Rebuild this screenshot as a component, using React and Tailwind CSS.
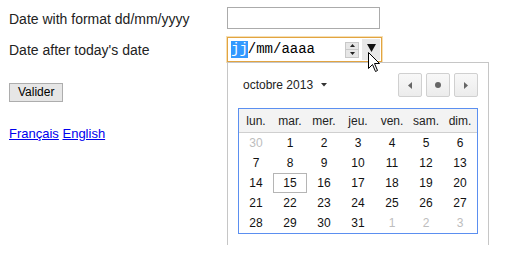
import React from "react";

const WEEKDAYS = ["lun.", "mar.", "mer.", "jeu.", "ven.", "sam.", "dim."];

const WEEKS = [
  [[30, true], [1], [2], [3], [4], [5], [6]],
  [[7], [8], [9], [10], [11], [12], [13]],
  [[14], [15], [16], [17], [18], [19], [20]],
  [[21], [22], [23], [24], [25], [26], [27]],
  [[28], [29], [30], [31], [1, true], [2, true], [3, true]],
];

function NavButton({ children }) {
  return (
    <div className="w-[24px] h-[24px] rounded-[2px] border border-[#d0d0d0] bg-gradient-to-b from-[#f8f8f8] to-[#ececec] flex items-center justify-center">
      {children}
    </div>
  );
}

function DatePopup() {
  return (
    <div className="absolute left-[227px] top-[62px] w-[262px] h-[183px] border-x border-t border-[#c6c6c6] bg-white px-[10px] pt-[10px]">
      <div className="flex items-center justify-between">
        <div className="flex items-center gap-[8px] pl-[5px] text-[12px] text-[#222]">
          <span>octobre 2013</span>
          <svg width="6" height="4" viewBox="0 0 6 4">
            <path d="M0 0 L6 0 L3 3.5 Z" fill="#333" />
          </svg>
        </div>
        <div className="flex gap-[4px]">
          <NavButton>
            <svg width="4" height="7" viewBox="0 0 4 7">
              <path d="M4 0 L4 7 L0 3.5 Z" fill="#666" />
            </svg>
          </NavButton>
          <NavButton>
            <div className="w-[6px] h-[6px] rounded-full bg-[#666]" />
          </NavButton>
          <NavButton>
            <svg width="4" height="7" viewBox="0 0 4 7">
              <path d="M0 0 L0 7 L4 3.5 Z" fill="#666" />
            </svg>
          </NavButton>
        </div>
      </div>

      <div className="mt-[11px] w-[240px] border border-[#5b8ff0] text-[12px]">
        <div className="grid grid-cols-7 h-[24px] bg-[#f3f3f3] border-b border-[#cfcfcf] items-center text-center text-[#222]">
          {WEEKDAYS.map((d) => (
            <div key={d}>{d}</div>
          ))}
        </div>
        {WEEKS.map((week, wi) => (
          <div key={wi} className="grid grid-cols-7 h-[20px]">
            {week.map(([n, muted], di) => (
              <div
                key={di}
                className={`flex items-center justify-center ${
                  muted ? "text-[#bdbdbd]" : "text-[#111]"
                } ${n === 15 && !muted ? "border border-[#b5b5b5]" : ""}`}
              >
                {n}
              </div>
            ))}
          </div>
        ))}
      </div>
    </div>
  );
}

function Cursor() {
  return (
    <svg
      className="absolute left-[368px] top-[52px]"
      width="13"
      height="21"
      viewBox="0 0 13 21"
    >
      <path
        d="M0.5 0.5 L0.5 16.5 L4.5 12.5 L7.5 19.5 L9.5 18.5 L6.5 11.5 L11.5 11.5 Z"
        fill="#fff"
        stroke="#000"
        strokeWidth="1"
        strokeLinejoin="miter"
      />
    </svg>
  );
}

export default function App() {
  return (
    <div className="relative w-[508px] h-[264px] bg-white font-['Liberation_Sans',Arial,sans-serif] text-[#222] overflow-hidden">
      <div className="pl-[9px] pt-[7px]">
        <div className="flex items-center h-[22px]">
          <label className="w-[218px] text-[14px] leading-[16px] pt-[2px]">
            Date with format dd/mm/yyyy
          </label>
          <div className="w-[153px] h-[22px] border border-[#ababab] bg-white" />
        </div>

        <div className="flex items-center h-[25px] mt-[8px]">
          <label className="w-[218px] text-[14px] leading-[16px] pt-[1px]">
            Date after today's date
          </label>
          <div className="w-[155px] h-[25px] border border-[#e2a440] shadow-[0_0_0_1px_#f6dfb4] bg-white flex items-center pl-[3px] pr-[1px]">
            <div className="font-['Liberation_Mono',monospace] text-[14px] leading-[17px] text-black flex">
              <span className="bg-[#3399ff] text-white">jj</span>
              <span>/mm/aaaa</span>
            </div>
            <div className="ml-auto flex items-center gap-[3px]">
              <div className="w-[14px] h-[16px] border border-[#c8c8c8] bg-[#e6e6e6] flex flex-col">
                <div className="flex-1 flex items-center justify-center border-b border-[#c8c8c8]">
                  <svg width="5" height="3" viewBox="0 0 5 3">
                    <path d="M0 3 L5 3 L2.5 0 Z" fill="#222" />
                  </svg>
                </div>
                <div className="flex-1 flex items-center justify-center">
                  <svg width="5" height="3" viewBox="0 0 5 3">
                    <path d="M0 0 L5 0 L2.5 3 Z" fill="#222" />
                  </svg>
                </div>
              </div>
              <div className="w-[18px] h-[21px] bg-[#e8e8e8] flex items-start justify-center pt-[5px]">
                <svg width="9" height="8" viewBox="0 0 9 8">
                  <path d="M0 0 L9 0 L4.5 8 Z" fill="#111" />
                </svg>
              </div>
            </div>
          </div>
        </div>

        <button className="mt-[21px] h-[19px] px-[8px] border border-[#adadad] bg-[#e6e6e6] text-[12px] leading-[15px] text-black">
          Valider
        </button>

        <div className="mt-[23px] text-[13px] leading-[15px]">
          <a href="#fr" className="text-[#0000ee] underline">
            Français
          </a>{" "}
          <a href="#en" className="text-[#0000ee] underline">
            English
          </a>
        </div>
      </div>

      <DatePopup />
      <Cursor />
    </div>
  );
}
